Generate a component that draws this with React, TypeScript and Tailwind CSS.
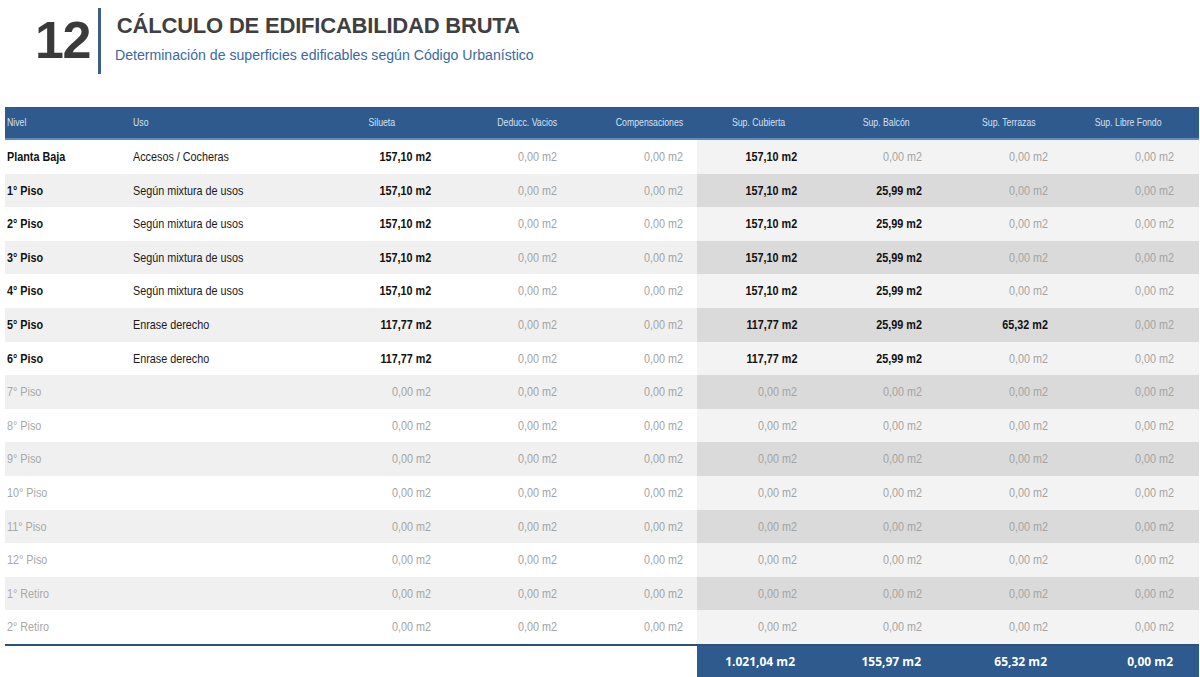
import React from "react";

const cols = "grid grid-cols-[122px_193px_136px_126px_115px_125px_126px_125px_126px]";

type Row = {
  nivel: string;
  uso: string;
  vals: string[];
};

const Z = "0,00 m2";

const rows: Row[] = [
  { nivel: "Planta Baja", uso: "Accesos / Cocheras", vals: ["157,10 m2", Z, Z, "157,10 m2", Z, Z, Z] },
  { nivel: "1° Piso", uso: "Según mixtura de usos", vals: ["157,10 m2", Z, Z, "157,10 m2", "25,99 m2", Z, Z] },
  { nivel: "2° Piso", uso: "Según mixtura de usos", vals: ["157,10 m2", Z, Z, "157,10 m2", "25,99 m2", Z, Z] },
  { nivel: "3° Piso", uso: "Según mixtura de usos", vals: ["157,10 m2", Z, Z, "157,10 m2", "25,99 m2", Z, Z] },
  { nivel: "4° Piso", uso: "Según mixtura de usos", vals: ["157,10 m2", Z, Z, "157,10 m2", "25,99 m2", Z, Z] },
  { nivel: "5° Piso", uso: "Enrase derecho", vals: ["117,77 m2", Z, Z, "117,77 m2", "25,99 m2", "65,32 m2", Z] },
  { nivel: "6° Piso", uso: "Enrase derecho", vals: ["117,77 m2", Z, Z, "117,77 m2", "25,99 m2", Z, Z] },
  { nivel: "7° Piso", uso: "", vals: [Z, Z, Z, Z, Z, Z, Z] },
  { nivel: "8° Piso", uso: "", vals: [Z, Z, Z, Z, Z, Z, Z] },
  { nivel: "9° Piso", uso: "", vals: [Z, Z, Z, Z, Z, Z, Z] },
  { nivel: "10° Piso", uso: "", vals: [Z, Z, Z, Z, Z, Z, Z] },
  { nivel: "11° Piso", uso: "", vals: [Z, Z, Z, Z, Z, Z, Z] },
  { nivel: "12° Piso", uso: "", vals: [Z, Z, Z, Z, Z, Z, Z] },
  { nivel: "1° Retiro", uso: "", vals: [Z, Z, Z, Z, Z, Z, Z] },
  { nivel: "2° Retiro", uso: "", vals: [Z, Z, Z, Z, Z, Z, Z] },
];

// right padding of the value cells, per column (silueta .. libre fondo)
const valPad = ["pr-[25px]", "pr-[25px]", "pr-[14px]", "pr-[25px]", "pr-[26px]", "pr-[25px]", "pr-[25px]"];

// no narrow font installed: squeeze Liberation Sans like Arial Narrow
const L = ({ children }: { children: React.ReactNode }) => (
  <span className="inline-block whitespace-nowrap origin-left scale-x-[0.83]">{children}</span>
);
const R = ({ children }: { children: React.ReactNode }) => (
  <span className="inline-block whitespace-nowrap origin-right scale-x-[0.83]">{children}</span>
);

const App = () => {
  return (
    <div className="w-[1200px] h-[677px] overflow-hidden bg-white font-['Liberation_Sans',Arial,sans-serif]">
      {/* titulo */}
      <div className="flex items-start pl-[35px] pt-[8px] h-[107px]">
        <div className="text-[52px] leading-none font-bold text-[#3a3a3a] mt-[6px] tracking-[-1.5px]">12</div>
        <div className="w-[3px] h-[66px] bg-[#3d5f86] ml-[8px]" />
        <div className="ml-[16px] mt-[5px]">
          <div className="text-[22px] leading-[25px] font-bold text-[#404040] tracking-[-0.2px]">
            CÁLCULO DE EDIFICABILIDAD BRUTA
          </div>
          <div className="text-[15.5px] leading-[20px] mt-[7px] text-[#3a69a3] -ml-[2px]">
            <span className="inline-block whitespace-nowrap origin-left scale-x-[0.91]">
              Determinación de superficies edificables según Código Urbanístico
            </span>
          </div>
        </div>
      </div>

      <div className="ml-[5px] w-[1194px]">
        {/* cabecera */}
        <div className={`${cols} h-[33px] bg-[#2e5a8e] border-b-2 border-[#5d8cc4] text-[10.5px] text-[#d6e2f0] items-center`}>
          <div className="pl-[2px]"><L>Nivel</L></div>
          <div className="pl-[6px]"><L>Uso</L></div>
          <div className="text-right pr-[61px]"><R>Silueta</R></div>
          <div className="text-right pr-[25px]"><R>Deducc. Vacios</R></div>
          <div className="text-right pr-[14px]"><R>Compensaciones</R></div>
          <div className="text-right pr-[37px]"><R>Sup. Cubierta</R></div>
          <div className="text-right pr-[38px]"><R>Sup. Balcón</R></div>
          <div className="text-right pr-[37px]"><R>Sup. Terrazas</R></div>
          <div className="text-right pr-[37px]"><R>Sup. Libre Fondo</R></div>
        </div>

        {rows.map((r, i) => {
          const alt = i % 2 === 1;
          const active = r.uso !== "";
          return (
            <div key={r.nivel} className={`${cols} h-[33.6px] items-center text-[13px]`}>
              <div className={`h-full flex items-center pl-[2px] ${alt ? "bg-[#f0f0f0]" : "bg-white"} ${active ? "font-bold text-[#111]" : "text-[#a8a8a8]"}`}>
                <L>{r.nivel}</L>
              </div>
              <div className={`h-full flex items-center pl-[6px] text-[#1a1a1a] ${alt ? "bg-[#f0f0f0]" : "bg-white"}`}>
                <L>{r.uso}</L>
              </div>
              {r.vals.map((v, j) => {
                const right = j >= 3;
                const bg = right ? (alt ? "bg-[#dadada]" : "bg-[#f3f3f3]") : alt ? "bg-[#f0f0f0]" : "bg-white";
                const strong = v !== Z;
                return (
                  <div
                    key={j}
                    className={`h-full flex items-center justify-end ${valPad[j]} ${bg} ${strong ? "font-bold text-[#111]" : "text-[#a3a3a3]"}`}
                  >
                    <R>{v}</R>
                  </div>
                );
              })}
            </div>
          );
        })}

        {/* totales */}
        <div className={`${cols} h-[34px] border-t-2 border-[#2f5078] font-['Open_Sans',sans-serif] font-bold text-[12px] text-white`}>
          <div className="col-span-5 bg-white" />
          <div className="bg-[#2e5a8e] flex items-center justify-end pr-[27px]">1.021,04 m2</div>
          <div className="bg-[#2e5a8e] flex items-center justify-end pr-[27px]">155,97 m2</div>
          <div className="bg-[#2e5a8e] flex items-center justify-end pr-[26px]">65,32 m2</div>
          <div className="bg-[#2e5a8e] flex items-center justify-end pr-[26px]">0,00 m2</div>
        </div>
      </div>
    </div>
  );
};

export default App;
